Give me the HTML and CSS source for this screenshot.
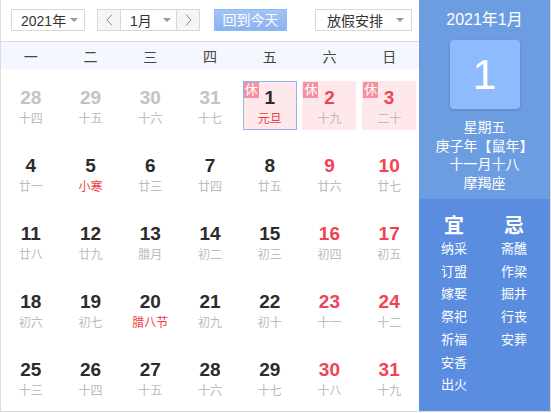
FILE: index.html
```html
<!DOCTYPE html>
<html lang="zh-CN">
<head>
<meta charset="utf-8">
<link rel="stylesheet" href="styles.css">
</head>
<body>
<div class="cal">
  <div class="main">
    <div class="toolbar">
      <div class="sel sel-year"><span>2021年</span><i class="caret"></i></div>
      <div class="month">
        <span class="nav"><svg width="7" height="12" viewBox="0 0 7 12"><polyline points="6,0.5 1,6 6,11.5" fill="none" stroke="#888" stroke-width="1"/></svg></span>
        <div class="month-sel"><span>1月</span><i class="caret"></i></div>
        <span class="nav"><svg width="7" height="12" viewBox="0 0 7 12"><polyline points="1,0.5 6,6 1,11.5" fill="none" stroke="#888" stroke-width="1"/></svg></span>
      </div>
      <div class="today">回到今天</div>
      <div class="sel sel-holiday"><span>放假安排</span><i class="caret"></i></div>
    </div>
    <div class="weekdays">
      <span>一</span><span>二</span><span>三</span><span>四</span><span>五</span><span>六</span><span>日</span>
    </div>
    <div class="grid">
      <div class="cell"><div class="day other"><b>28</b><span>十四</span></div></div>
      <div class="cell"><div class="day other"><b>29</b><span>十五</span></div></div>
      <div class="cell"><div class="day other"><b>30</b><span>十六</span></div></div>
      <div class="cell"><div class="day other"><b>31</b><span>十七</span></div></div>
      <div class="cell"><div class="day rest selected"><em>休</em><b>1</b><span class="fest">元旦</span></div></div>
      <div class="cell"><div class="day rest wkend"><em>休</em><b>2</b><span>十九</span></div></div>
      <div class="cell"><div class="day rest wkend"><em>休</em><b>3</b><span>二十</span></div></div>

      <div class="cell"><div class="day"><b>4</b><span>廿一</span></div></div>
      <div class="cell"><div class="day"><b>5</b><span class="fest">小寒</span></div></div>
      <div class="cell"><div class="day"><b>6</b><span>廿三</span></div></div>
      <div class="cell"><div class="day"><b>7</b><span>廿四</span></div></div>
      <div class="cell"><div class="day"><b>8</b><span>廿五</span></div></div>
      <div class="cell"><div class="day wkend"><b>9</b><span>廿六</span></div></div>
      <div class="cell"><div class="day wkend"><b>10</b><span>廿七</span></div></div>

      <div class="cell"><div class="day"><b>11</b><span>廿八</span></div></div>
      <div class="cell"><div class="day"><b>12</b><span>廿九</span></div></div>
      <div class="cell"><div class="day"><b>13</b><span>腊月</span></div></div>
      <div class="cell"><div class="day"><b>14</b><span>初二</span></div></div>
      <div class="cell"><div class="day"><b>15</b><span>初三</span></div></div>
      <div class="cell"><div class="day wkend"><b>16</b><span>初四</span></div></div>
      <div class="cell"><div class="day wkend"><b>17</b><span>初五</span></div></div>

      <div class="cell"><div class="day"><b>18</b><span>初六</span></div></div>
      <div class="cell"><div class="day"><b>19</b><span>初七</span></div></div>
      <div class="cell"><div class="day"><b>20</b><span class="fest">腊八节</span></div></div>
      <div class="cell"><div class="day"><b>21</b><span>初九</span></div></div>
      <div class="cell"><div class="day"><b>22</b><span>初十</span></div></div>
      <div class="cell"><div class="day wkend"><b>23</b><span>十一</span></div></div>
      <div class="cell"><div class="day wkend"><b>24</b><span>十二</span></div></div>

      <div class="cell"><div class="day"><b>25</b><span>十三</span></div></div>
      <div class="cell"><div class="day"><b>26</b><span>十四</span></div></div>
      <div class="cell"><div class="day"><b>27</b><span>十五</span></div></div>
      <div class="cell"><div class="day"><b>28</b><span>十六</span></div></div>
      <div class="cell"><div class="day"><b>29</b><span>十七</span></div></div>
      <div class="cell"><div class="day wkend"><b>30</b><span>十八</span></div></div>
      <div class="cell"><div class="day wkend"><b>31</b><span>十九</span></div></div>
    </div>
  </div>
  <aside class="side">
    <div class="side-top">
      <div class="ym">2021年1月</div>
      <div class="big">1</div>
      <div class="info">
        <p>星期五</p>
        <p>庚子年【鼠年】</p>
        <p>十一月十八</p>
        <p>摩羯座</p>
      </div>
    </div>
    <div class="side-bottom">
      <div class="col">
        <h3>宜</h3>
        <p>纳采</p><p>订盟</p><p>嫁娶</p><p>祭祀</p><p>祈福</p><p>安香</p><p>出火</p>
      </div>
      <div class="col">
        <h3>忌</h3>
        <p>斋醮</p><p>作梁</p><p>掘井</p><p>行丧</p><p>安葬</p>
      </div>
    </div>
  </aside>
</div>
</body>
</html>
```

FILE: styles.css
```css
* { box-sizing: border-box; }
html, body { margin: 0; padding: 0; background: #fff; }
body {
  font-family: "Liberation Sans", "Noto Sans CJK SC", sans-serif;
  color: #333;
}
.cal {
  display: flex;
  width: 551px;
  height: 412px;
  border: 1px solid #dcdcdc;
  border-top: 0;
}
.main {
  width: 418px;
  display: flex;
  flex-direction: column;
}
.toolbar {
  height: 42px;
  border-bottom: 1px solid #dcdcdc;
  display: flex;
  align-items: flex-start;
  padding: 9px 0 0 10px;
}
.sel {
  height: 22px;
  border: 1px solid #d8d8d8;
  display: flex;
  align-items: center;
  justify-content: space-between;
  font-size: 14px;
  color: #333;
  background: #fff;
}
.sel-year { width: 74px; padding: 0 6px 0 9px; }
.sel-holiday { width: 97px; padding: 0 7px 0 11px; margin-left: 28px; }
.caret {
  width: 0; height: 0;
  border-left: 4px solid transparent;
  border-right: 4px solid transparent;
  border-top: 4px solid #9a9a9a;
}
.month {
  margin-left: 12px;
  width: 103px;
  height: 22px;
  border: 1px solid #d8d8d8;
  display: flex;
}
.nav {
  width: 22px;
  background: #f5f5f5;
  display: flex;
  align-items: center;
  justify-content: center;
}
.month-sel {
  flex: 1;
  border-left: 1px solid #d8d8d8;
  border-right: 1px solid #d8d8d8;
  display: flex;
  align-items: center;
  justify-content: space-between;
  padding: 0 5px 0 9px;
  font-size: 14px;
}
.today {
  margin-left: 14px;
  width: 73px;
  height: 22px;
  background: linear-gradient(#a2c4f6, #8ab2f1);
  border: 1px solid #93b7f0;
  color: #fff;
  font-size: 14px;
  line-height: 20px;
  text-align: center;
}
.weekdays {
  height: 27px;
  background: #f4f8fe;
  display: grid;
  grid-template-columns: repeat(7, 1fr);
  align-items: center;
  text-align: center;
  font-size: 14px;
  color: #444;
}
.grid {
  flex: 1;
  display: grid;
  grid-template-columns: repeat(7, 1fr);
  grid-template-rows: repeat(5, 68px);
}
.cell {
  display: flex;
  justify-content: center;
  padding-top: 12px;
}
.day {
  position: relative;
  width: 54px;
  height: 49px;
  display: flex;
  flex-direction: column;
  align-items: center;
  padding-top: 5px;
  border: 1px solid transparent;
}
.day b {
  font-size: 19px;
  line-height: 22px;
  font-weight: bold;
  color: #2c2c2c;
}
.day span {
  font-size: 12px;
  line-height: 16px;
  margin-top: 2px;
  color: #bcbcbc;
  white-space: nowrap;
}
.day span.fest { color: #f03c3c; }
.day.other b { color: #c3c3c3; }
.day.wkend b { color: #f04455; }
.day.rest { background: #fee8ec; }
.day.selected { border-color: #8fb4ef; }
.day em {
  position: absolute;
  left: 0;
  top: 0;
  width: 15px;
  height: 16px;
  background: #f5909e;
  color: #fff;
  font-style: normal;
  font-size: 13px;
  line-height: 16px;
  text-align: center;
}
.side {
  width: 131px;
  display: flex;
  flex-direction: column;
  color: #fff;
}
.side-top {
  height: 199px;
  background: #6d9de1;
  display: flex;
  flex-direction: column;
  align-items: center;
  padding-top: 10px;
}
.ym { font-size: 16px; line-height: 20px; }
.big {
  margin-top: 10px;
  width: 70px;
  height: 69px;
  background: #8ebbfd;
  border-radius: 4px;
  box-shadow: 0 1px 3px rgba(40, 80, 150, 0.35);
  font-size: 43px;
  line-height: 69px;
  text-align: center;
  font-weight: normal;
}
.info { margin-top: 9px; text-align: center; }
.info p { margin: 0; font-size: 14px; line-height: 18.5px; }
.side-bottom {
  flex: 1;
  background: #5a8ddf;
  display: flex;
  padding: 14px 5px 0;
}
.col { width: 60px; text-align: center; }
.col h3 {
  margin: 0 0 -1px;
  font-size: 20px;
  line-height: 26px;
  font-weight: bold;
}
.col p {
  margin: 0;
  font-size: 13px;
  line-height: 22.7px;
}
```
